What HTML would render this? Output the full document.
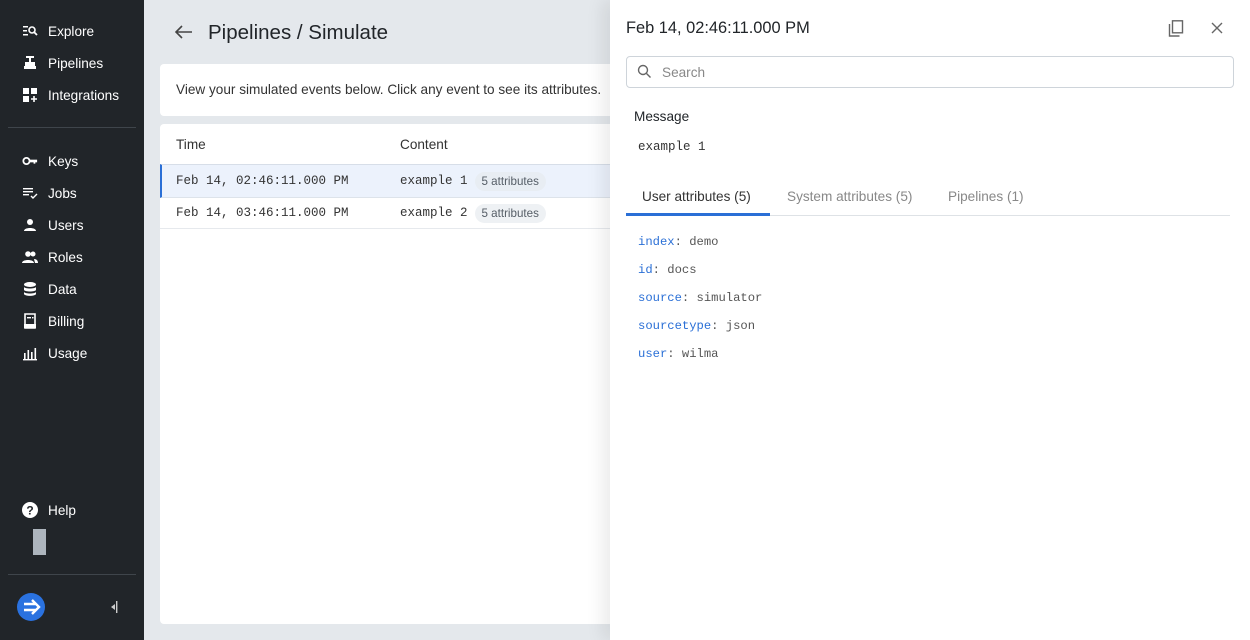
<!DOCTYPE html>
<html><head><meta charset="utf-8"><style>
*{box-sizing:border-box;margin:0;padding:0}
body{width:1250px;height:640px;overflow:hidden;font-family:"Liberation Sans",sans-serif;background:#e4e8ec;position:relative}
.sb{position:absolute;left:0;top:0;width:144px;height:640px;background:#212529;color:#fff;font-size:13.6px}
.it{position:absolute;left:22px;display:flex;align-items:center;gap:10px}
.it svg{width:16px;height:16px;fill:#fff}
.hr{position:absolute;left:8px;width:128px;height:1px;background:#3f454b}
.main{position:absolute;left:144px;top:0;width:466px;height:640px}
.mono{font-family:"Liberation Mono","DejaVu Sans Mono",monospace}
.card{position:absolute;left:16px;background:#fff;border-radius:4px;width:470px}
.row{position:absolute;left:240px;display:flex;align-items:center;height:22px;font-size:12.5px}
.badge{display:inline-block;background:#e8edf3;color:#555d66;font-family:"Liberation Sans",sans-serif;font-size:11.6px;border-radius:10px;padding:3px 7px;margin-left:7px}
.panel{position:absolute;left:610px;top:0;width:640px;height:640px;background:#fff;box-shadow:-8px 0 16px rgba(0,0,0,.08)}
.attr{position:absolute;left:28px;font-size:12.2px;color:#555}
.attr b{font-weight:normal;color:#2a6fd6}
</style></head><body>
<div class="sb">
 <div class="it" style="top:23px"><svg viewBox="0 0 16 16"><rect x="1" y="3" width="5" height="1.5"/><rect x="1" y="7" width="4" height="1.5"/><rect x="1" y="11" width="5" height="1.5"/><circle cx="10" cy="7" r="3" fill="none" stroke="#fff" stroke-width="1.6"/><path d="M12 9l3 3" stroke="#fff" stroke-width="1.8"/></svg>Explore</div>
 <div class="it" style="top:55px"><svg viewBox="0 0 16 16"><rect x="4" y="1" width="8" height="2"/><rect x="7" y="3" width="2" height="4"/><rect x="3" y="7" width="10" height="4"/><rect x="2" y="11" width="12" height="3"/></svg>Pipelines</div>
 <div class="it" style="top:87px"><svg viewBox="0 0 16 16"><rect x="1" y="1" width="6" height="6"/><rect x="9" y="1" width="6" height="6"/><rect x="1" y="9" width="6" height="6"/><path d="M12 9v6M9 12h6" stroke="#fff" stroke-width="1.6"/></svg>Integrations</div>
 <div class="hr" style="top:127px"></div>
 <div class="it" style="top:153px"><svg viewBox="0 0 18 16"><circle cx="5" cy="8" r="3.5" fill="none" stroke="#fff" stroke-width="2"/><rect x="8" y="6.5" width="9" height="3"/><rect x="13" y="8" width="2" height="3"/></svg>Keys</div>
 <div class="it" style="top:185px"><svg viewBox="0 0 16 16"><rect x="1" y="3" width="10" height="1.4"/><rect x="1" y="6" width="10" height="1.4"/><rect x="1" y="9" width="6" height="1.4"/><path d="M9 11l2 2 4-4" stroke="#fff" stroke-width="1.4" fill="none"/></svg>Jobs</div>
 <div class="it" style="top:217px"><svg viewBox="0 0 16 16"><circle cx="8" cy="5" r="3"/><path d="M2 14c0-4 12-4 12 0z"/></svg>Users</div>
 <div class="it" style="top:249px"><svg viewBox="0 0 16 16"><circle cx="6" cy="5" r="2.8"/><circle cx="11" cy="5" r="2.5"/><path d="M0 14c0-4 12-4 12 0zM12 10c3 0 4 2 4 4h-3z"/></svg>Roles</div>
 <div class="it" style="top:281px"><svg viewBox="0 0 16 16"><ellipse cx="8" cy="3.5" rx="6" ry="2.5"/><path d="M2 6c1 2 11 2 12 0v3c-1 2-11 2-12 0zM2 11c1 2 11 2 12 0v2c-1 2.5-11 2.5-12 0z"/></svg>Data</div>
 <div class="it" style="top:313px"><svg viewBox="0 0 16 16"><path d="M3 1h10v14H3z" fill="none" stroke="#fff" stroke-width="1.6"/><rect x="5" y="4" width="4" height="1.4"/><rect x="10" y="4" width="1.5" height="1.4"/><rect x="2" y="11" width="12" height="4"/></svg>Billing</div>
 <div class="it" style="top:345px"><svg viewBox="0 0 16 16"><rect x="1" y="14" width="14" height="1.4"/><rect x="2" y="8" width="1.6" height="6"/><rect x="5.5" y="5" width="1.6" height="9"/><rect x="9" y="7" width="1.6" height="7"/><rect x="12.5" y="3" width="1.6" height="11"/></svg>Usage</div>
 <div class="it" style="top:502px"><svg viewBox="0 0 16 16"><circle cx="8" cy="8" r="8"/><text x="8" y="12.5" font-size="12" font-weight="bold" text-anchor="middle" fill="#212529" font-family="Liberation Sans">?</text></svg>Help</div>
 <div style="position:absolute;left:33px;top:529px;width:13px;height:26px;background:#adb5bd"></div>
 <div class="hr" style="top:574px"></div>
 <div style="position:absolute;left:17px;top:593px;width:28px;height:28px;border-radius:50%;background:#2a72e0"><svg viewBox="0 0 28 28" width="28" height="28"><path d="M7 11h12M7 17h12M15 7l7 7-7 7" stroke="#fff" stroke-width="2.4" fill="none"/></svg></div>
 <div style="position:absolute;left:110px;top:600px"><svg width="10" height="14"><path d="M1 7l4-3v6z" fill="#ccc"/><rect x="6" y="1" width="1.4" height="12" fill="#ccc"/></svg></div>
</div>
<div class="main">
 <svg style="position:absolute;left:31px;top:25px" width="18" height="14"><path d="M1 7h16M7 1L1 7l6 6" stroke="#444" stroke-width="1.6" fill="none"/></svg>
 <div style="position:absolute;left:64px;top:21px;font-size:20.5px;color:#212529">Pipelines / Simulate</div>
 <div class="card" style="top:64px;height:52px;padding:18px 16px;font-size:13.6px;color:#333;white-space:nowrap">View your simulated events below. Click any event to see its attributes.</div>
 <div class="card" style="top:124px;height:500px;font-size:13.6px;color:#333">
  <div style="position:absolute;left:16px;top:13px">Time</div>
  <div style="position:absolute;left:240px;top:13px">Content</div>
  <div style="position:absolute;left:0;top:40px;width:470px;height:34px;background:#ecf2fc;border-top:1px solid #d7dee8;border-bottom:1px solid #dde3ea;border-left:2px solid #2a6fd6"></div>
  <div class="mono" style="position:absolute;left:16px;top:50px;font-size:12.5px">Feb 14, 02:46:11.000 PM</div>
  <div class="row mono" style="top:46px">example 1<span class="badge">5 attributes</span></div>
  <div class="mono" style="position:absolute;left:16px;top:82px;font-size:12.5px">Feb 14, 03:46:11.000 PM</div>
  <div class="row mono" style="top:78px">example 2<span class="badge" style="background:#eef1f4">5 attributes</span></div>
  <div style="position:absolute;left:0;top:104px;width:470px;height:1px;background:#e6e9ed"></div>
 </div>
</div>
<div class="panel">
 <div style="position:absolute;left:16px;top:19px;font-size:16.4px;color:#212529">Feb 14, 02:46:11.000 PM</div>
 <svg style="position:absolute;left:558px;top:20px" width="16" height="17"><rect x="4.5" y="0.8" width="10" height="12" fill="none" stroke="#666" stroke-width="1.4"/><path d="M1.5 4v12h10" fill="none" stroke="#666" stroke-width="1.4"/></svg>
 <svg style="position:absolute;left:601px;top:22px" width="12" height="12"><path d="M1 1l10 10M11 1L1 11" stroke="#666" stroke-width="1.4"/></svg>
 <div style="position:absolute;left:16px;top:56px;width:608px;height:32px;border:1px solid #ced4da;border-radius:4px"></div>
 <svg style="position:absolute;left:27px;top:64px" width="15" height="15"><circle cx="6" cy="6" r="4.5" fill="none" stroke="#666" stroke-width="1.4"/><path d="M9.5 9.5l4 4" stroke="#666" stroke-width="1.4"/></svg>
 <div style="position:absolute;left:52px;top:65px;font-size:13.6px;color:#888">Search</div>
 <div style="position:absolute;left:24px;top:109px;font-size:13.6px;color:#212529">Message</div>
 <div class="mono" style="position:absolute;left:28px;top:140px;font-size:12.5px;color:#333">example 1</div>
 <div style="position:absolute;left:32px;top:189px;font-size:13.6px;color:#333">User attributes (5)</div>
 <div style="position:absolute;left:177px;top:189px;font-size:13.6px;color:#888">System attributes (5)</div>
 <div style="position:absolute;left:338px;top:189px;font-size:13.6px;color:#888">Pipelines (1)</div>
 <div style="position:absolute;left:16px;top:215px;width:604px;height:1px;background:#dee2e6"></div>
 <div style="position:absolute;left:16px;top:213px;width:144px;height:3px;background:#2a6fd6"></div>
 <div class="attr mono" style="top:235px"><b>index</b>: demo</div>
 <div class="attr mono" style="top:263px"><b>id</b>: docs</div>
 <div class="attr mono" style="top:291px"><b>source</b>: simulator</div>
 <div class="attr mono" style="top:319px"><b>sourcetype</b>: json</div>
 <div class="attr mono" style="top:347px"><b>user</b>: wilma</div>
</div>
</body></html>
